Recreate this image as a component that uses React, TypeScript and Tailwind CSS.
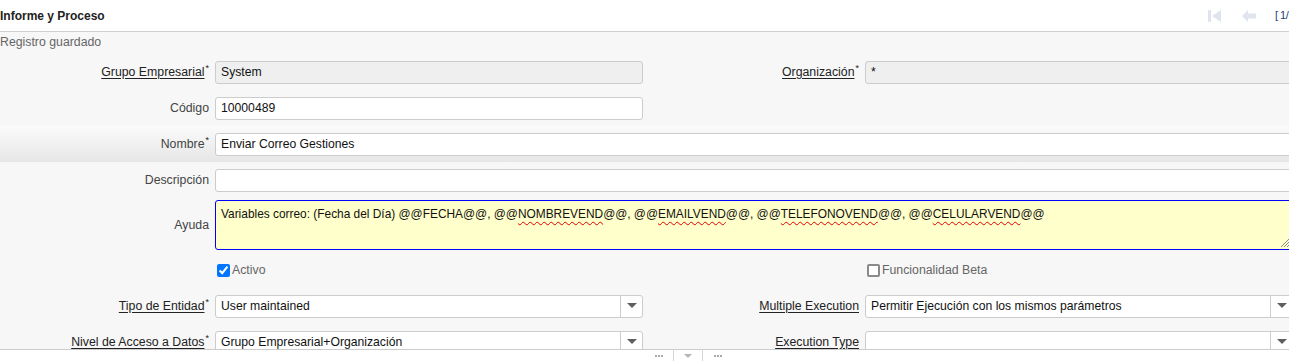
const font = { fontFamily: '"Liberation Sans", Arial, sans-serif' };

function Label({ text, link, req }: { text: string; link?: boolean; req?: boolean }) {
  return (
    <span className="whitespace-nowrap text-[12.3px]">
      <span className={link ? "text-[#222] underline underline-offset-[2px]" : "text-[#444]"}>{text}</span>
      {req && <sup className="ml-px text-[9px] text-[#222]">*</sup>}
    </span>
  );
}

function Caret() {
  return (
    <svg width="10" height="6" viewBox="0 0 10 6">
      <path d="M0 0 L10 0 L5 5 Z" fill="#5f5f5f" />
    </svg>
  );
}

function Field({ value, disabled, select, wide }: { value?: string; disabled?: boolean; select?: boolean; wide?: boolean }) {
  return (
    <div
      className={`flex h-[23px] items-center overflow-hidden rounded-[3px] border border-[#cccccc] ${
        disabled ? "bg-[#efefef]" : "bg-white"
      } ${wide ? "flex-1" : "w-[428px]"}`}
    >
      <span className="flex-1 truncate pl-[5px] text-[12.2px] text-[#111]">{value}</span>
      {select && (
        <span className="flex h-full w-[22px] items-center justify-center border-l border-[#cccccc]">
          <Caret />
        </span>
      )}
    </div>
  );
}

function Row({
  label,
  link,
  req,
  children,
  right,
  className = "",
}: {
  label?: string;
  link?: boolean;
  req?: boolean;
  children?: React.ReactNode;
  right?: React.ReactNode;
  className?: string;
}) {
  return (
    <div className={`flex h-[36px] items-center ${className}`}>
      <div className="w-[209px] text-right">{label && <Label text={label} link={link} req={req} />}</div>
      <div className="ml-[6px] flex flex-1 items-center">{children}</div>
      {right}
    </div>
  );
}

function RightPair({ label, link, req, children }: { label: string; link?: boolean; req?: boolean; children: React.ReactNode }) {
  return (
    <div className="flex w-[650px] items-center">
      <div className="w-[216px] text-right">
        <Label text={label} link={link} req={req} />
      </div>
      <div className="ml-[6px]">{children}</div>
    </div>
  );
}

function Squiggle({ children }: { children: React.ReactNode }) {
  return (
    <span className="underline decoration-[#e00000] decoration-wavy decoration-1 underline-offset-[3px]">{children}</span>
  );
}

function Dots() {
  return (
    <span className="flex gap-[1px]">
      <span className="h-[2px] w-[2px] bg-[#aaa]" />
      <span className="h-[2px] w-[2px] bg-[#aaa]" />
      <span className="h-[2px] w-[2px] bg-[#aaa]" />
    </span>
  );
}

export default function App() {
  return (
    <div className="flex h-[361px] w-full flex-col overflow-hidden bg-[#f7f7f7] text-[12px]" style={font}>
      <div className="flex h-[32px] shrink-0 items-center border-b border-[#cfcfcf] bg-white">
        <span className="font-bold text-[#222]">Informe y Proceso</span>
        <div className="ml-auto flex items-center">
          <svg width="14" height="12" viewBox="0 0 14 12" className="mr-[20px]">
            <rect x="0" y="0" width="3" height="12" fill="#dfe4ee" />
            <path d="M13 0 L13 12 L4 6 Z" fill="#dfe4ee" />
          </svg>
          <svg width="14" height="12" viewBox="0 0 14 12" className="mr-[19px]">
            <path d="M0 6 L6 0 L6 3.5 L14 3.5 L14 8.5 L6 8.5 L6 12 Z" fill="#dfe4ee" />
          </svg>
          <span className="w-[14px] whitespace-nowrap text-[11px] tracking-[-0.5px] text-[#1f3c74]">[ 1/</span>
        </div>
      </div>

      <div className="flex-1 overflow-hidden">
        <div className="w-[1293px]">
          <div className="h-[20px] leading-[20px] text-[12.3px] text-[#666]">Registro guardado</div>
          <div className="mt-[2px]">
            <Row
              label="Grupo Empresarial"
              link
              req
              right={
                <RightPair label="Organización" link req>
                  <Field value="*" disabled />
                </RightPair>
              }
            >
              <Field value="System" disabled />
            </Row>
            <Row label="Código">
              <Field value="10000489" />
            </Row>
            <Row label="Nombre" req className="bg-linear-to-b from-[#fbfbfb] to-[#e6e6e6]">
              <Field value="Enviar Correo Gestiones" wide />
            </Row>
            <Row label="Descripción">
              <Field wide />
            </Row>
            <div className="flex h-[54px] items-center">
              <div className="w-[209px] text-right text-[12.3px] text-[#444]">Ayuda</div>
              <div className="relative ml-[6px] h-[50px] flex-1 rounded-[3px] border border-[#0000ff] bg-[#ffffcc] pl-[5px] pt-[5px] text-[11.9px] text-[#111]">
                Variables correo: (Fecha del Día) @@FECHA@@, @@<Squiggle>NOMBREVEND</Squiggle>@@, @@<Squiggle>EMAILVEND</Squiggle>@@,
                @@<Squiggle>TELEFONOVEND</Squiggle>@@, @@<Squiggle>CELULARVEND</Squiggle>@@
                <svg width="11" height="11" viewBox="0 0 11 11" className="absolute bottom-[1px] right-[1px]">
                  <path d="M10 1 L1 10 M10 4 L4 10 M10 7 L7 10" stroke="#8a8a8a" strokeWidth="1" />
                </svg>
              </div>
            </div>
            <Row
              right={
                <div className="flex w-[650px] items-center pl-[224px]">
                  <span className="h-[13px] w-[13px] rounded-[2px] border-2 border-[#8a8a8a] bg-white" />
                  <span className="ml-[2px] text-[12.3px] text-[#666]">Funcionalidad Beta</span>
                </div>
              }
            >
              <div className="flex w-[428px] items-center pl-[2px]">
                <input type="checkbox" checked readOnly className="m-0 h-[13px] w-[13px]" />
                <span className="ml-[2px] text-[12.3px] text-[#666]">Activo</span>
              </div>
            </Row>
            <Row
              label="Tipo de Entidad"
              link
              req
              right={
                <RightPair label="Multiple Execution" link>
                  <Field value="Permitir Ejecución con los mismos parámetros" select />
                </RightPair>
              }
            >
              <Field value="User maintained" select />
            </Row>
            <Row
              label="Nivel de Acceso a Datos"
              link
              req
              right={
                <RightPair label="Execution Type" link>
                  <Field select />
                </RightPair>
              }
            >
              <Field value="Grupo Empresarial+Organización" select />
            </Row>
          </div>
        </div>
      </div>

      <div className="flex h-[12px] shrink-0 items-stretch border-t border-[#cccccc] bg-white">
        <div className="ml-[651px] flex w-[15px] items-center justify-center">
          <Dots />
        </div>
        <div className="ml-[7px] w-px bg-[#d5d5d5]" />
        <div className="flex w-[28px] items-center justify-center">
          <svg width="8" height="4" viewBox="0 0 8 4">
            <path d="M0 0 L8 0 L4 4 Z" fill="#b5b5b5" />
          </svg>
        </div>
        <div className="w-px bg-[#d5d5d5]" />
        <div className="flex w-[30px] items-center justify-center">
          <Dots />
        </div>
      </div>
    </div>
  );
}
